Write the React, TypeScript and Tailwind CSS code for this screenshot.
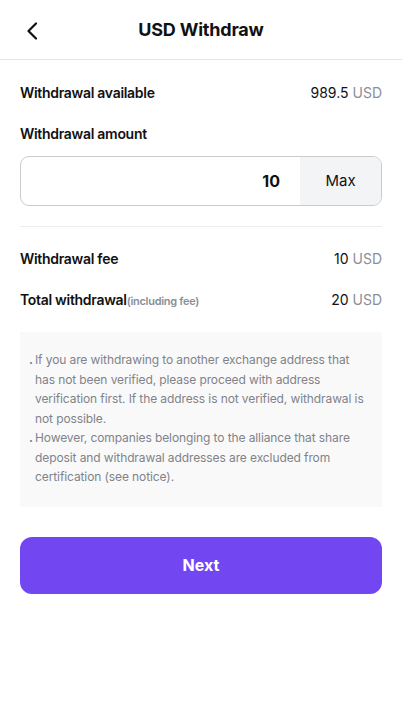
import React from "react";

export default function App() {
  return (
    <div className="w-[402px] min-h-[709px] bg-white text-[#111] font-['Inter',sans-serif]">
      <header className="relative h-[60px] flex items-center justify-center border-b border-[#e5e5e5]">
        <button className="absolute left-[22px] top-[20px] w-[20px] h-[22px] flex items-center justify-center">
          <svg width="12" height="18" viewBox="0 0 12 18" fill="none">
            <path d="M10 1.5L2.5 9L10 16.5" stroke="#111" strokeWidth="2.2" strokeLinecap="round" strokeLinejoin="round" />
          </svg>
        </button>
        <h1 className="text-[18px] font-bold tracking-[-0.2px]">USD Withdraw</h1>
      </header>

      <main className="px-[20px]">
        <div className="flex justify-between items-center mt-[22px] h-[20px]">
          <span className="text-[14px] font-semibold tracking-[-0.3px]">Withdrawal available</span>
          <span className="text-[14px]">989.5 <span className="text-[#8a8f98]">USD</span></span>
        </div>

        <div className="mt-[21px] h-[20px] flex items-center">
          <span className="text-[14px] font-semibold tracking-[-0.3px]">Withdrawal amount</span>
        </div>

        <div className="mt-[13px] h-[50px] flex border border-[#c9cbcf] rounded-[9px] overflow-hidden">
          <div className="flex-1 flex items-center justify-end pr-[20px] text-[16px] font-bold">10</div>
          <div className="w-[81px] bg-[#f3f4f6] flex items-center justify-center text-[15px]">Max</div>
        </div>

        <div className="mt-[20px] border-t border-[#ececec]" />

        <div className="flex justify-between items-center mt-[21px] h-[20px]">
          <span className="text-[14px] font-semibold tracking-[-0.3px]">Withdrawal fee</span>
          <span className="text-[14px]">10 <span className="text-[#8a8f98]">USD</span></span>
        </div>

        <div className="flex justify-between items-center mt-[21px] h-[20px]">
          <span className="text-[14px] font-semibold tracking-[-0.3px]">
            Total withdrawal<span className="text-[11px] text-[#8a8f98] font-semibold">(including fee)</span>
          </span>
          <span className="text-[14px]">20 <span className="text-[#8a8f98]">USD</span></span>
        </div>

        <div className="mt-[23px] bg-[#f9f9f9] pl-[9px] pr-[14px] pt-[18px] pb-[20px] text-[12px] leading-[19.5px] text-[#7f838a] tracking-[-0.1px]">
          <div className="flex">
            <span className="w-[6px] shrink-0 font-bold">.</span>
            <span>If you are withdrawing to another exchange address that has not been verified, please proceed with address verification first. If the address is not verified, withdrawal is not possible.</span>
          </div>
          <div className="flex">
            <span className="w-[6px] shrink-0 font-bold">.</span>
            <span>However, companies belonging to the alliance that share deposit and withdrawal addresses are excluded from certification (see notice).</span>
          </div>
        </div>

        <button className="mt-[30px] w-full h-[57px] rounded-[12px] bg-[#7247f2] text-white text-[16px] font-bold">
          Next
        </button>
      </main>
    </div>
  );
}
